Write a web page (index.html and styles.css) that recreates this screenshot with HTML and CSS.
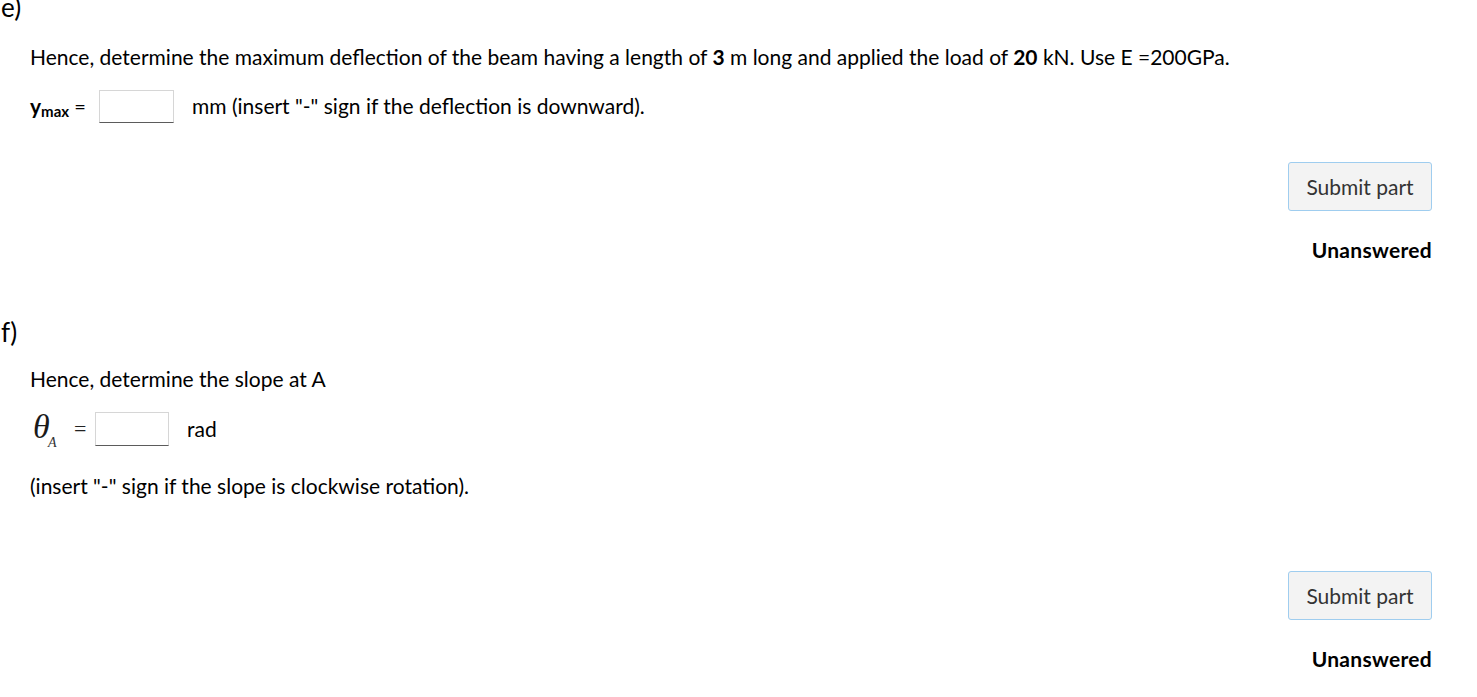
FILE: index.html
```html
<!DOCTYPE html>
<html>
<head>
<meta charset="utf-8">
<link rel="stylesheet" href="styles.css">
</head>
<body>
<div class="page">
  <section class="part first">
    <h3 class="part-label">e)</h3>
    <div class="content">
      <p class="prompt">Hence, determine the maximum deflection of the beam having a length of <b>3</b> m long and applied the load of <b>20</b> kN. Use E =200GPa.</p>
      <div class="answer-row">
        <span class="var"><b>y<sub>max</sub></b> =</span>
        <span class="input"></span>
        <span class="unit">mm (insert "-" sign if the deflection is downward).</span>
      </div>
    </div>
    <div class="actions">
      <button class="submit">Submit part</button>
      <div class="status">Unanswered</div>
    </div>
  </section>
  <section class="part second">
    <h3 class="part-label">f)</h3>
    <div class="content">
      <p class="prompt">Hence, determine the slope at A</p>
      <div class="answer-row theta-row">
        <span class="theta"><i class="th">θ</i><i class="sub-a">A</i></span>
        <span class="eq">=</span>
        <span class="input small"></span>
        <span class="unit rad">rad</span>
      </div>
      <p class="note">(insert "-" sign if the slope is clockwise rotation).</p>
    </div>
    <div class="actions">
      <button class="submit">Submit part</button>
      <div class="status">Unanswered</div>
    </div>
  </section>
</div>
</body>
</html>
```

FILE: styles.css
```css
html, body {
  margin: 0;
  padding: 0;
  background: #fff;
}
body {
  font-family: "Source Sans Pro", Lato, "Liberation Sans", sans-serif;
  color: #000;
  font-size: 21px;
}
.page {
  width: 1432px;
}
.part {
  display: flex;
  flex-direction: column;
}
.first {
  margin-top: -9px;
}
.part-label {
  margin: 0;
  font-weight: 400;
  font-size: 26px;
  line-height: 32px;
  padding-left: 1px;
}
.content {
  padding-left: 30px;
}
.prompt {
  margin: 0;
  margin-top: 21px;
  line-height: 26px;
}
.answer-row {
  display: flex;
  align-items: center;
  margin-top: 19px;
  height: 34px;
}
.var {
  font-size: 20px;
  width: 69px;
}
.var b {
  font-size: 21px;
}
.var b sub {
  font-size: 15px;
  vertical-align: -3px;
}
.input {
  display: inline-block;
  width: 73px;
  height: 31px;
  border: 1px solid #d6d6d6;
  border-bottom: 1px solid #5b5b5b;
  background: #fff;
  margin-right: 18px;
}
.input.small {
  width: 72px;
  height: 32px;
}
.unit {
  line-height: 26px;
}
.actions {
  display: flex;
  flex-direction: column;
  align-items: flex-end;
}
.first .actions {
  margin-top: 39px;
}
.submit {
  font-family: inherit;
  font-size: 21px;
  color: #333;
  background: #f3f3f3;
  border: 1px solid #9fcdef;
  border-radius: 3px;
  width: 144px;
  height: 49px;
  padding: 0;
}
.status {
  font-weight: 700;
  margin-top: 26px;
  line-height: 26px;
  letter-spacing: 0.3px;
}
.second {
  margin-top: 53px;
}
.second .prompt {
  margin-top: 18px;
}
.theta-row {
  margin-top: 19px;
  height: 36px;
}
.theta {
  position: relative;
  width: 41px;
  height: 36px;
  font-family: "Liberation Serif", serif;
  padding-left: 3px;
}
.th {
  font-size: 34px;
  line-height: 32px;
  color: #1a1a1a;
}
.sub-a {
  position: absolute;
  left: 18px;
  top: 24px;
  font-size: 14px;
  color: #333;
}
.eq {
  width: 21px;
  font-size: 22px;
  font-family: "Liberation Serif", serif;
  color: #222;
}
.note {
  margin: 0;
  margin-top: 26px;
  line-height: 26px;
}
.second .actions {
  margin-top: 72px;
}
```
